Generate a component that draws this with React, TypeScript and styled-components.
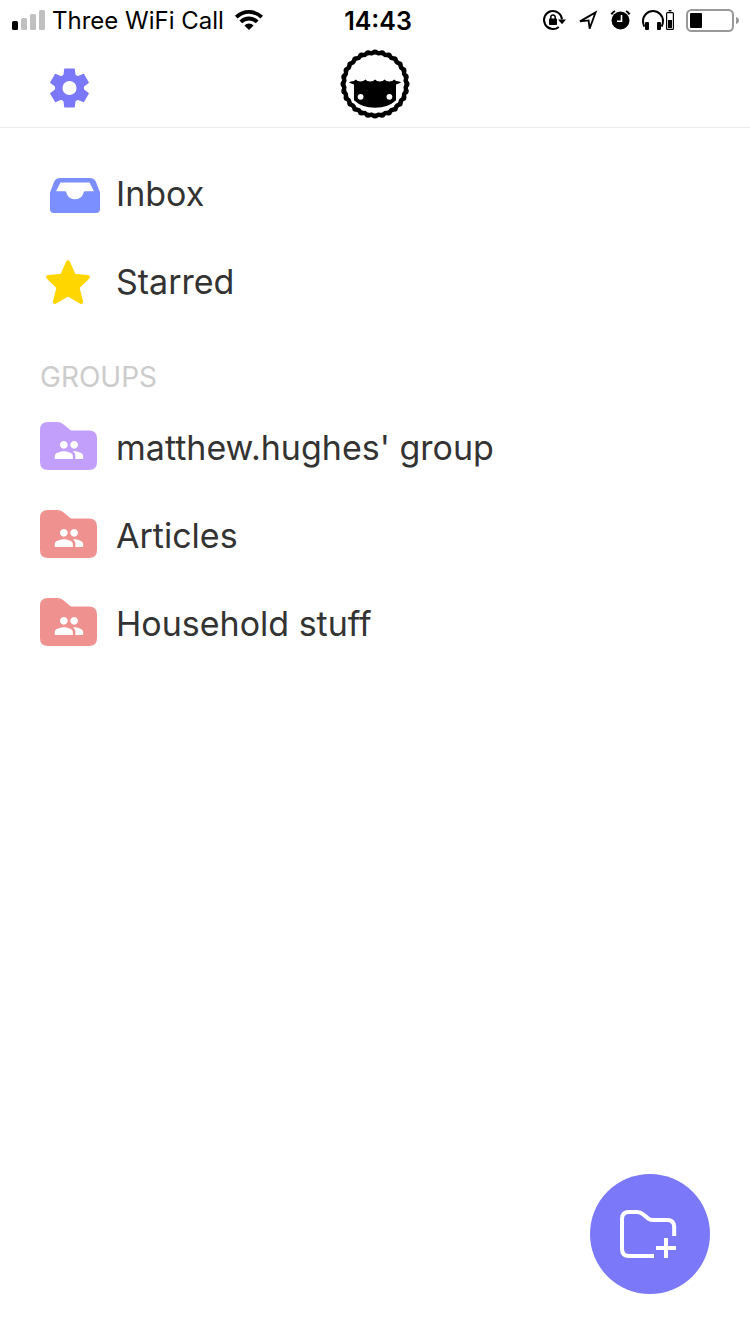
import React from "react";
import styled, { createGlobalStyle } from "styled-components";

const GlobalStyle = createGlobalStyle`
  * { box-sizing: border-box; }
  body {
    margin: 0;
    background: #fff;
    color: #333;
    font-family: Inter, "Liberation Sans", sans-serif;
  }
  svg { display: block; flex: none; overflow: visible; }
`;

const Screen = styled.div`
  min-height: 100vh;
  display: flex;
  flex-direction: column;
`;

const StatusBar = styled.div`
  height: 40px;
  padding: 0 11px 0 12px;
  display: grid;
  grid-template-columns: 1fr auto 1fr;
  align-items: center;
  color: #000;
  font-size: 24px;
  line-height: 38px;
`;

const StatusGroup = styled.div<{ $end?: boolean; $gap: number }>`
  display: flex;
  align-items: center;
  gap: ${(p) => p.$gap}px;
  justify-content: ${(p) => (p.$end ? "flex-end" : "flex-start")};
  white-space: nowrap;
`;

const Carrier = styled.span`
  margin-right: 4px;
  padding-top: 2px;
`;

const Time = styled.time`
  padding: 2px 0 0 5px;
  font-size: 25px;
  font-weight: 600;
`;

const Header = styled.header`
  height: 88px;
  padding: 0 40px;
  display: grid;
  grid-template-columns: 1fr auto 1fr;
  align-items: center;
  border-bottom: 1px solid #ececec;
`;

const IconButton = styled.button`
  justify-self: start;
  padding: 8px 6px 0;
  border: 0;
  background: none;
  cursor: pointer;
`;

const Menu = styled.nav`
  padding: 21px 40px;
`;

const List = styled.ul`
  margin: 0;
  padding: 0;
  list-style: none;
`;

const Row = styled.a`
  height: 88px;
  display: flex;
  align-items: center;
  gap: 19px;
  color: #333;
  font-size: 34px;
  text-decoration: none;

  svg {
    margin-bottom: 2px;
  }
`;

const SectionTitle = styled.h2`
  margin: 0;
  padding: 32px 0 6px;
  color: #ccc;
  font-size: 28px;
  font-weight: 400;
  line-height: 40px;
`;

const AddButton = styled.button`
  position: fixed;
  right: 40px;
  bottom: 40px;
  width: 120px;
  height: 120px;
  padding: 0;
  border: 0;
  border-radius: 50%;
  background: #7b79f9;
  cursor: pointer;
`;

const Signal = () => (
  <svg width="33" height="20" aria-label="Signal strength">
    <rect x="0" y="11" width="6" height="9" rx="1.5" />
    <g fill="#c0c0c0">
      <rect x="9" y="8" width="6" height="12" rx="1.5" />
      <rect x="18" y="4" width="6" height="16" rx="1.5" />
      <rect x="27" y="0" width="6" height="20" rx="1.5" />
    </g>
  </svg>
);

const Wifi = () => (
  <svg width="28" height="20" viewBox="0 0 28 20" aria-label="Wi-Fi">
    <g fill="none" stroke="#000" strokeWidth="3.8">
      <path d="M1.3 7.2a18 18 0 0 1 25.4 0" />
      <path d="M5.8 11.9a11.6 11.6 0 0 1 16.4 0" />
    </g>
    <path d="M14 20l-4.600-4.600a6.400 6.400 0 0 1 9.200 0z" />
  </svg>
);

const RotationLock = () => (
  <svg width="23" height="20" viewBox="0 0 23 20" aria-label="Rotation lock">
    <path d="M15.800 16.900A9 9 0 1 1 19 9.500" fill="none" stroke="#000" strokeWidth="2" />
    <path d="M15 9.500h8l-4 4.700z" />
    <rect x="6" y="8.600" width="8" height="6.400" rx="0.800" />
    <path d="M7.800 9V7.200a2.200 2.200 0 0 1 4.400 0V9" fill="none" stroke="#000" strokeWidth="1.500" />
  </svg>
);

const Location = () => (
  <svg width="20" height="19" viewBox="0 0 20 19" aria-label="Location">
    <path d="M2 10.400L17.600 1.400 11.600 17.600 10.600 9.400z" fill="none" stroke="#000" strokeWidth="1.800" />
  </svg>
);

const Alarm = () => (
  <svg width="20" height="20" viewBox="0 0 20 20" aria-label="Alarm">
    <circle cx="10.500" cy="10.500" r="9" />
    <path d="M1.400 4.400a10 10 0 0 1 3.600-3.400M19.600 4.400a10 10 0 0 0-3.600-3.400" fill="none" stroke="#000" strokeWidth="2" />
    <path d="M11.500 5v6.200H7" fill="none" stroke="#fff" strokeWidth="1.600" />
  </svg>
);

const Headphones = () => (
  <svg width="32" height="20" viewBox="0 0 32 20" aria-label="Headphones battery">
    <path d="M2.400 16.600Q1 14.400 1 11a10 10 0 0 1 20 0Q21 14.400 19.600 16.600" fill="none" stroke="#000" strokeWidth="2" />
    <rect x="3" y="12" width="4" height="8" rx="1" />
    <rect x="15" y="12" width="4" height="8" rx="1" />
    <rect x="24.600" y="2.600" width="6.800" height="16.800" rx="1" fill="none" stroke="#000" strokeWidth="1.200" />
    <rect x="26.400" y="0" width="3.200" height="1.400" rx="0.700" />
    <rect x="26" y="10" width="4" height="8" />
  </svg>
);

const Battery = () => (
  <svg width="53" height="23" viewBox="0 0 53 23" aria-label="Battery">
    <rect x="1" y="1" width="46" height="21" rx="4.500" fill="none" stroke="#999" strokeWidth="2" />
    <path d="M50 8q3 1 3 3.500t-3 3.500z" fill="#999" />
    <rect x="4" y="4" width="12" height="15" rx="1" />
  </svg>
);

const Gear = () => (
  <svg width="47" height="48" viewBox="-12 -12 24 24" fill="#7b79f9">
    <circle r="7.400" />
    {[0, 60, 120].map((angle) => (
      <path
        key={angle}
        transform={`rotate(${angle})`}
        d="M-2.400-10H2.400L2.700-9.800 3.100-6.600V6.600L2.700 9.800 2.400 10H-2.400L-2.700 9.800-3.100 6.600V-6.600L-2.700-9.800z"
      />
    ))}
    <circle r="3.600" fill="#fff" />
  </svg>
);

const WOOL = Array.from({ length: 28 }, (_, i) => (i * Math.PI) / 14);

const Sheep = () => (
  <svg width="70" height="70" viewBox="0 0 70 70" role="img" aria-label="Home">
    <circle cx="35" cy="35" r="33.400" />
    {WOOL.map((a) => (
      <circle key={a} cx={35 + 31 * Math.cos(a)} cy={35 + 31 * Math.sin(a)} r="3.500" />
    ))}
    <circle cx="35" cy="35" r="28.800" fill="#fff" />
    {WOOL.map((a) => (
      <circle key={a} cx={35 + 26.400 * Math.cos(a)} cy={35 + 26.400 * Math.sin(a)} r="3" fill="#fff" />
    ))}
    <path d="M9 33.600Q9.200 32.600 11 32.400 14.400 32.200 15.800 30.400 17.200 32.400 20.400 32.400T25.400 30.400Q26.800 32.400 30.200 32.400T35 30.400Q36.400 32.400 39.800 32.400T44.600 30.400Q46 32.400 49.400 32.400T54.200 30.400Q55.600 32.200 59 32.400 60.800 32.600 61 33.600 59 34.800 56 35.400V51.200Q48 58.800 35 58.800T14 51.200V35.400Q11 34.800 9 33.600z" />
    <circle cx="20.600" cy="47.800" r="2.900" fill="#fff" />
    <circle cx="49.400" cy="47.800" r="2.900" fill="#fff" />
  </svg>
);

const Inbox = () => (
  <svg width="57" height="48" viewBox="0 0 57 48">
    <path
      fill="#7b8fff"
      fillRule="evenodd"
      d="M20 10h30q4.200 0 5.800 3.600L60 24.400V41q0 4-4 4H14q-4 0-4-4V24.400L14.200 13.600Q15.800 10 20 10zM20.500 14.600L16 23.200h8.400c2.400 0 2 1.800 2.800 3.600 1.400 3 4 4.400 7.800 4.400s6.400-1.400 7.800-4.400c.8-1.800.4-3.600 2.800-3.600H54l-4.500-8.600z"
    />
  </svg>
);

const Star = () => (
  <svg width="57" height="48" viewBox="0 0 57 48">
    <path
      d="M28 6.400L34 19.800 48 21 37.400 31.200 41.200 46 28 38.200 14.800 46 18.600 31.200 8 21 22 19.800z"
      fill="#ffd600"
      stroke="#ffd600"
      strokeWidth="4"
      strokeLinejoin="round"
    />
  </svg>
);

const GroupFolder = ({ color }: { color: string }) => (
  <svg width="57" height="48" viewBox="0 0 57 48">
    <path
      fill={color}
      d="M8 0h9c3.200 0 5 1.200 7 2.800l5 4.200c1.200 1.100 2.200 1.600 4 1.600h16q8 0 8 8V40q0 8-8 8H8q-8 0-8-8V8q0-8 8-8z"
    />
    <path
      fill="#fff"
      transform="translate(13.500 12.500) scale(1.290)"
      d="M16 11c1.660 0 2.990-1.340 2.990-3S17.660 5 16 5s-3 1.340-3 3 1.340 3 3 3zm-8 0c1.660 0 2.990-1.340 2.990-3S9.660 5 8 5 5 6.340 5 8s1.340 3 3 3zm0 2c-2.330 0-7 1.170-7 3.500V19h14v-2.500c0-2.330-4.670-3.500-7-3.500zm8 0c-.29 0-.62.020-.97.050 1.160.84 1.970 1.970 1.970 3.450V19h6v-2.500c0-2.330-4.670-3.500-7-3.500z"
    />
  </svg>
);

const NewFolder = () => (
  <svg width="120" height="120" viewBox="0 0 120 120" fill="none" stroke="#fff" strokeWidth="4">
    <path d="M64 82H39q-7 0-7-7V45q0-7 7-7h8c2.800 0 4.200.6 6 2.200l5 4.200c1.400 1.100 2.400 1.600 4.400 1.600H77q7.200 0 7.200 7v9" />
    <path d="M66 74h20M76 64v20" />
  </svg>
);

const groups = [
  { name: "matthew.hughes' group", color: "#c29ffb" },
  { name: "Articles", color: "#ef918e" },
  { name: "Household stuff", color: "#ef918e" },
];

export default function App() {
  return (
    <Screen>
      <GlobalStyle />
      <StatusBar>
        <StatusGroup $gap={7}>
          <Signal />
          <Carrier>Three WiFi Call</Carrier>
          <Wifi />
        </StatusGroup>
        <Time>14:43</Time>
        <StatusGroup $gap={12} $end>
          <RotationLock />
          <Location />
          <Alarm />
          <Headphones />
          <Battery />
        </StatusGroup>
      </StatusBar>
      <Header>
        <IconButton aria-label="Settings">
          <Gear />
        </IconButton>
        <Sheep />
      </Header>
      <Menu>
        <List>
          <li>
            <Row href="#inbox">
              <Inbox />
              Inbox
            </Row>
          </li>
          <li>
            <Row href="#starred">
              <Star />
              Starred
            </Row>
          </li>
        </List>
        <SectionTitle>GROUPS</SectionTitle>
        <List>
          {groups.map((group) => (
            <li key={group.name}>
              <Row href="#group">
                <GroupFolder color={group.color} />
                {group.name}
              </Row>
            </li>
          ))}
        </List>
      </Menu>
      <AddButton aria-label="New folder">
        <NewFolder />
      </AddButton>
    </Screen>
  );
}
